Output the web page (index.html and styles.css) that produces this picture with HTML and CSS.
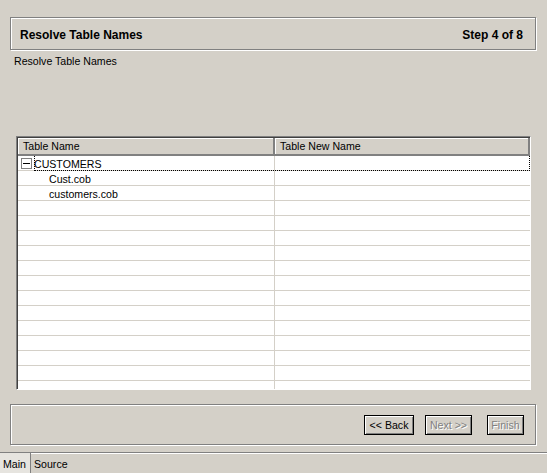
FILE: index.html
```html
<!DOCTYPE html>
<html>
<head>
<meta charset="utf-8">
<link rel="stylesheet" href="styles.css">
</head>
<body>
<div class="page">
  <div class="wizard">
    <div class="header">
      <span class="title">Resolve Table Names</span>
      <span class="step">Step 4 of 8</span>
    </div>
    <div class="subtitle">Resolve Table Names</div>
    <div class="table">
      <div class="thead">
        <div class="th c1">Table Name</div>
        <div class="th c2">Table New Name</div>
      </div>
      <div class="tbody">
        <div class="row focus">
          <div class="td c1"><span class="minus"></span><span class="node">CUSTOMERS</span></div>
          <div class="td c2"></div>
        </div>
        <div class="row"><div class="td c1 child">Cust.cob</div><div class="td c2"></div></div>
        <div class="row"><div class="td c1 child">customers.cob</div><div class="td c2"></div></div>
        <div class="row"><div class="td c1"></div><div class="td c2"></div></div>
        <div class="row"><div class="td c1"></div><div class="td c2"></div></div>
        <div class="row"><div class="td c1"></div><div class="td c2"></div></div>
        <div class="row"><div class="td c1"></div><div class="td c2"></div></div>
        <div class="row"><div class="td c1"></div><div class="td c2"></div></div>
        <div class="row"><div class="td c1"></div><div class="td c2"></div></div>
        <div class="row"><div class="td c1"></div><div class="td c2"></div></div>
        <div class="row"><div class="td c1"></div><div class="td c2"></div></div>
        <div class="row"><div class="td c1"></div><div class="td c2"></div></div>
        <div class="row"><div class="td c1"></div><div class="td c2"></div></div>
        <div class="row"><div class="td c1"></div><div class="td c2"></div></div>
        <div class="row"><div class="td c1"></div><div class="td c2"></div></div>
        <div class="row"><div class="td c1"></div><div class="td c2"></div></div>
      </div>
    </div>
    <div class="buttons">
      <button class="btn back">&lt;&lt; Back</button>
      <button class="btn next" disabled>Next &gt;&gt;</button>
      <button class="btn finish" disabled>Finish</button>
    </div>
  </div>
  <div class="tabs">
    <div class="tab active">Main</div>
    <div class="tab">Source</div>
  </div>
</div>
</body>
</html>
```
FILE: styles.css
```css
html, body {
  margin: 0;
  padding: 0;
  background: #d4d0c8;
}
body {
  font-family: "Liberation Sans", Arial, sans-serif;
  font-size: 11px;
  color: #000;
}
.page {
  width: 547px;
  height: 473px;
  display: flex;
  flex-direction: column;
  overflow: hidden;
}
.wizard {
  padding: 17px 10px 0 10px;
  display: flex;
  flex-direction: column;
  flex: none;
}
.wizard > * { flex: none; }
.header {
  height: 33px;
  box-sizing: border-box;
  border: 1px solid #808080;
  box-shadow: inset 1px 1px 0 #fff, 1px 1px 0 #fff;
  display: flex;
  align-items: center;
  justify-content: space-between;
  padding: 2px 12px 0 9px;
  font-weight: bold;
  font-size: 12px;
  margin-right: 1px;
}
.subtitle {
  margin: 5px 0 0 4px;
  line-height: 13px;
  font-size: 10.6px;
}
.table {
  margin: 68px 6px 0 6px;
  height: 254px;
  border-top: 1px solid #808080;
  border-left: 1px solid #808080;
  border-right: 1px solid #fff;
  border-bottom: 1px solid #fff;
  box-sizing: border-box;
  background: #fff;
  display: flex;
  flex-direction: column;
  overflow: hidden;
}
.thead {
  display: flex;
  height: 19px;
  flex: none;
  border-top: 1px solid #404040;
  border-left: 1px solid #404040;
  box-sizing: border-box;
}
.th {
  background: #d4d0c8;
  border-right: 2px solid #808080;
  border-bottom: 2px solid #808080;
  box-shadow: inset 1px 1px 0 #fff;
  box-sizing: border-box;
  padding: 2px 0 0 5px;
  line-height: 13px;
  font-size: 10.6px;
}
.c1 { width: 257px; flex: none; }
.c2 { flex: 1; }
.tbody {
  border-left: 1px solid #404040;
  flex: 1;
  overflow: hidden;
}
.row {
  display: flex;
  height: 15px;
  box-sizing: border-box;
  border-bottom: 1px solid #d4d0c8;
  position: relative;
}
.td {
  line-height: 14px;
  height: 14px;
  box-sizing: border-box;
  font-size: 10.6px;
  padding-top: 1px;
}
.td.c1 {
  border-right: 1px solid #d4d0c8;
  display: flex;
  align-items: center;
  padding-left: 3px;
}
.td.child { padding-left: 31px; }
.focus::after {
  content: "";
  position: absolute;
  left: 16px;
  right: 0;
  top: -1px;
  bottom: -1px;
  border: 1px dotted #000;
  pointer-events: none;
}
.minus {
  width: 11px;
  height: 11px;
  border: 1px solid #808080;
  box-sizing: border-box;
  position: relative;
  background: #fff;
  margin-right: 2px;
  flex: none;
}
.minus::after {
  content: "";
  position: absolute;
  left: 1px;
  right: 1px;
  top: 4px;
  height: 1px;
  background: #000;
}
.buttons {
  margin-top: 14px;
  height: 41px;
  border: 1px solid #808080;
  box-shadow: inset 1px 1px 0 #fff, 1px 1px 0 #fff;
  display: flex;
  justify-content: flex-end;
  align-items: center;
  gap: 11px;
  padding: 1px 11px 0 0;
  box-sizing: border-box;
  margin-right: 1px;
}
.btn {
  font-family: "Liberation Sans", Arial, sans-serif;
  font-size: 10.6px;
  height: 20px;
  padding: 0;
  white-space: nowrap;
  border: 1px solid #000;
  background: #d4d0c8;
  box-shadow: inset 1px 1px 0 #fff, inset -1px -1px 0 #808080;
  color: #000;
  margin: 0;
  box-sizing: border-box;
}
.back { width: 50px; }
.next { width: 47px; }
.finish { width: 37px; margin-left: 4px; }
.btn:disabled {
  color: #808080;
  text-shadow: 1px 1px 0 #fff;
}
.tabs {
  margin-top: 7px;
  border-top: 1px solid #808080;
  box-shadow: inset 0 1px 0 #fff;
  display: flex;
  flex: 1;
  font-size: 10.6px;
}
.tab {
  padding: 4px 4px 0 3px;
  line-height: 14px;
}
.tab.active {
  background: #e6e4df;
  border-right: 1px solid #808080;
  padding: 4px 3px 0 3px;
  width: 24px;
}
```
